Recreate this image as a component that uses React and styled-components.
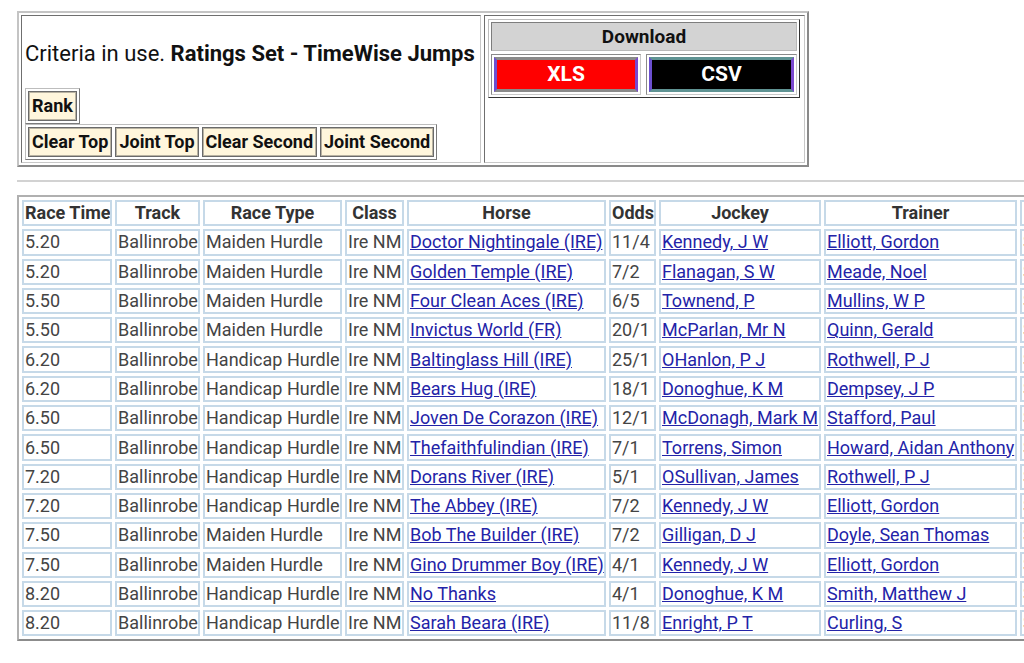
import React from "react";
import styled, { createGlobalStyle } from "styled-components";

const Global = createGlobalStyle`
  * { box-sizing: border-box; }
  html, body { margin: 0; padding: 0; overflow: hidden; background: #fff; }
  body { font-family: Roboto, "Liberation Sans", sans-serif; color: #222; }
`;

const Page = styled.div`
  width: 1400px;
  padding: 11px 0 0 17px;
`;

const Panel = styled.div`
  display: flex;
  gap: 3px;
  width: 792px;
  height: 156px;
  padding: 2px;
  border: 2px solid;
  border-color: #c4c4c4 #8a8a8a #8a8a8a #c4c4c4;
`;

const Cell = styled.div`
  width: ${(p) => p.$w}px;
  border: 1px solid;
  border-color: #6f6f6f #c8c8c8 #c8c8c8 #6f6f6f;
  padding: ${(p) => p.$pad};
  display: flex;
  flex-direction: column;
  align-items: flex-start;
`;

const Criteria = styled.p`
  margin: 25px 0 21px;
  font-size: 22px;
  line-height: 26px;
  color: #111;
  white-space: nowrap;
  b { font-weight: 700; }
`;

const ButtonGroup = styled.div`
  display: inline-flex;
  gap: 3px;
  padding: 2px;
  border: 1px solid;
  border-color: #bdbdbd #7a7a7a #7a7a7a #bdbdbd;
`;

const RankButton = styled.div`
  background: #fff6dc;
  border: 1px solid #6a6a6a;
  box-shadow: inset 0 0 0 1px #b9b3a2;
  padding: 3px 3px;
  font-size: 18px;
  line-height: 22px;
  font-weight: 700;
  color: #111;
  white-space: nowrap;
`;

const DownloadBox = styled.div`
  width: 312px;
  display: grid;
  grid-template-columns: 150px 151px;
  gap: 3px 5px;
  padding: 2px;
  border: 1px solid;
  border-color: #bdbdbd #333 #333 #bdbdbd;
`;

const DownloadHead = styled.div`
  grid-column: 1 / 3;
  height: 29px;
  background: #d3d3d3;
  border: 1px solid;
  border-color: #7d7d7d #b9b9b9 #b9b9b9 #7d7d7d;
  text-align: center;
  font-size: 19px;
  line-height: 27px;
  font-weight: 700;
  color: #111;
`;

const DlCell = styled.div`
  height: 41px;
  padding: 2px;
  border: 1px solid;
  border-color: #8a8a8a #c9c9c9 #c9c9c9 #8a8a8a;
`;

const DlButton = styled.div`
  height: 100%;
  background: ${(p) => p.$bg};
  border: 3px solid;
  border-color: ${(p) => p.$edge} #7a48cf ${(p) => p.$edge} #6b4fd0;
  color: #fff;
  font-weight: 700;
  font-size: 21px;
  line-height: 28px;
  text-align: center;
`;

const Rule = styled.hr`
  margin: 13px 0 13px;
  border: 0;
  border-top: 2px solid #d2d2d2;
`;

const Table = styled.table`
  table-layout: fixed;
  width: 1158px;
  border-collapse: separate;
  border-spacing: 3px;
  border: 2px solid;
  border-color: #b0b0b0 #8c8c8c #8c8c8c #b0b0b0;
  font-size: 18px;
`;

const Th = styled.th`
  width: ${(p) => p.$w}px;
  height: 26.3px;
  padding: 1px 1px;
  border: 2px solid #c6d9e8;
  font-weight: 700;
  line-height: 20px;
  color: #333;
  text-align: center;
  white-space: nowrap;
  overflow: hidden;
`;

const Td = styled.td`
  height: 26.3px;
  padding: 1px 1px;
  border: 2px solid #c6d9e8;
  line-height: 20px;
  color: #444;
  text-align: left;
  white-space: nowrap;
  overflow: hidden;
`;

const Link = styled.a`
  color: #2323a8;
  text-decoration: underline;
`;

const cols = [
  ["Race Time", 90],
  ["Track", 85],
  ["Race Type", 139],
  ["Class", 59],
  ["Horse", 199],
  ["Odds", 47],
  ["Jockey", 162],
  ["Trainer", 193],
  ["Stats", 150],
];

const rows = [
  ["5.20", "Maiden Hurdle", "Doctor Nightingale (IRE)", "11/4", "Kennedy, J W", "Elliott, Gordon"],
  ["5.20", "Maiden Hurdle", "Golden Temple (IRE)", "7/2", "Flanagan, S W", "Meade, Noel"],
  ["5.50", "Maiden Hurdle", "Four Clean Aces (IRE)", "6/5", "Townend, P", "Mullins, W P"],
  ["5.50", "Maiden Hurdle", "Invictus World (FR)", "20/1", "McParlan, Mr N", "Quinn, Gerald"],
  ["6.20", "Handicap Hurdle", "Baltinglass Hill (IRE)", "25/1", "OHanlon, P J", "Rothwell, P J"],
  ["6.20", "Handicap Hurdle", "Bears Hug (IRE)", "18/1", "Donoghue, K M", "Dempsey, J P"],
  ["6.50", "Handicap Hurdle", "Joven De Corazon (IRE)", "12/1", "McDonagh, Mark M", "Stafford, Paul"],
  ["6.50", "Handicap Hurdle", "Thefaithfulindian (IRE)", "7/1", "Torrens, Simon", "Howard, Aidan Anthony"],
  ["7.20", "Handicap Hurdle", "Dorans River (IRE)", "5/1", "OSullivan, James", "Rothwell, P J"],
  ["7.20", "Handicap Hurdle", "The Abbey (IRE)", "7/2", "Kennedy, J W", "Elliott, Gordon"],
  ["7.50", "Maiden Hurdle", "Bob The Builder (IRE)", "7/2", "Gilligan, D J", "Doyle, Sean Thomas"],
  ["7.50", "Maiden Hurdle", "Gino Drummer Boy (IRE)", "4/1", "Kennedy, J W", "Elliott, Gordon"],
  ["8.20", "Handicap Hurdle", "No Thanks", "4/1", "Donoghue, K M", "Smith, Matthew J"],
  ["8.20", "Handicap Hurdle", "Sarah Beara (IRE)", "11/8", "Enright, P T", "Curling, S"],
];

export default function App() {
  return (
    <Page>
      <Global />
      <Panel>
        <Cell $w={460} $pad="0 3px">
          <Criteria>
            Criteria in use. <b>Ratings Set - TimeWise Jumps</b>
          </Criteria>
          <ButtonGroup>
            <RankButton>Rank</RankButton>
          </ButtonGroup>
          <ButtonGroup>
            <RankButton>Clear Top</RankButton>
            <RankButton>Joint Top</RankButton>
            <RankButton>Clear Second</RankButton>
            <RankButton>Joint Second</RankButton>
          </ButtonGroup>
        </Cell>
        <Cell $w={321} $pad="3px">
          <DownloadBox>
            <DownloadHead>Download</DownloadHead>
            <DlCell>
              <DlButton $bg="#ff0000" $edge="#8a8a8a">XLS</DlButton>
            </DlCell>
            <DlCell>
              <DlButton $bg="#000000" $edge="#5f9393">CSV</DlButton>
            </DlCell>
          </DownloadBox>
        </Cell>
      </Panel>
      <Rule />
      <Table>
        <thead>
          <tr>
            {cols.map(([name, w]) => (
              <Th key={name} $w={w}>{name}</Th>
            ))}
          </tr>
        </thead>
        <tbody>
          {rows.map((r, i) => (
            <tr key={i}>
              <Td>{r[0]}</Td>
              <Td>Ballinrobe</Td>
              <Td>{r[1]}</Td>
              <Td>Ire NM</Td>
              <Td><Link href="#">{r[2]}</Link></Td>
              <Td>{r[3]}</Td>
              <Td><Link href="#">{r[4]}</Link></Td>
              <Td><Link href="#">{r[5]}</Link></Td>
              <Td>Show</Td>
            </tr>
          ))}
        </tbody>
      </Table>
    </Page>
  );
}
